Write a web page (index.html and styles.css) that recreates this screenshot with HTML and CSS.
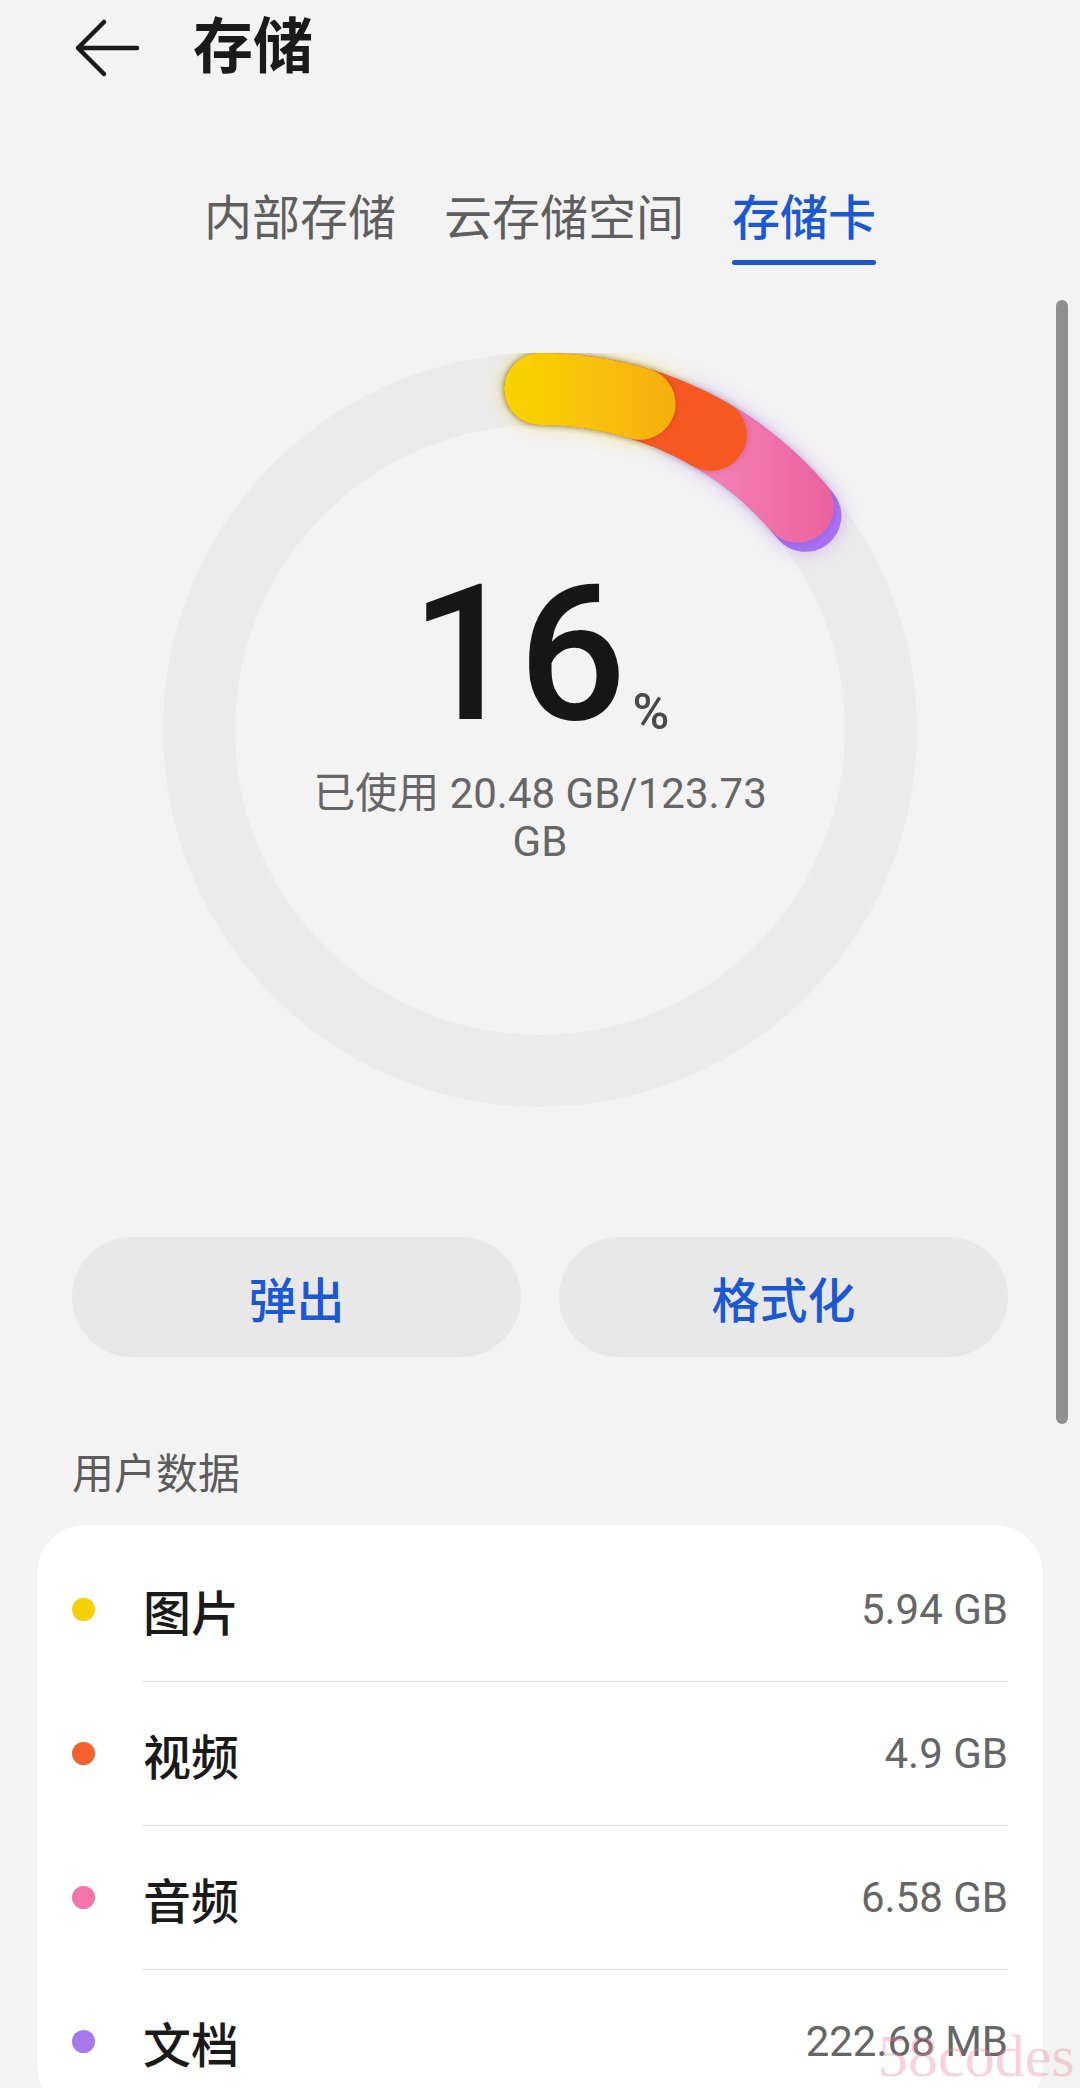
FILE: index.html
```html
<!DOCTYPE html>
<html lang="zh-CN">
<head>
    <meta charset="UTF-8">
    <meta name="viewport" content="width=device-width, initial-scale=1.0">
    <title>存储</title>
    <link rel="stylesheet" href="styles.css">
</head>
<body>

<div class="screen">
    <!-- Заголовок -->
    <header class="top-bar">
        <svg class="back" width="72" height="60" viewBox="0 0 72 60">
            <path d="M8 30 H67 M34 4 L8 30 L34 56" fill="none" stroke="#1a1a1a" stroke-width="4.5" stroke-linecap="round" stroke-linejoin="round"/>
        </svg>
        <h1>存储</h1>
    </header>

    <!-- Вкладки -->
    <nav class="tabs">
        <span class="tab">内部存储</span>
        <span class="tab">云存储空间</span>
        <span class="tab active">存储卡</span>
    </nav>

    <!-- Кольцо заполнения -->
    <div class="gauge">
        <svg width="754" height="754" viewBox="0 0 754 754">
            <defs>
                <!-- группа повёрнута на -90°, поэтому ось y здесь идёт вдоль экрана по горизонтали -->
                <linearGradient id="g-yellow" gradientUnits="userSpaceOnUse" x1="0" y1="335" x2="0" y2="505">
                    <stop offset="0" stop-color="#f9d600"/>
                    <stop offset="1" stop-color="#f6b00f"/>
                </linearGradient>
                <linearGradient id="g-pink" gradientUnits="userSpaceOnUse" x1="0" y1="560" x2="0" y2="680">
                    <stop offset="0" stop-color="#f27db3"/>
                    <stop offset="1" stop-color="#eb5f9c"/>
                </linearGradient>
                <filter id="glow" x="-20%" y="-20%" width="140%" height="140%">
                    <feGaussianBlur stdDeviation="10"/>
                </filter>
                <filter id="edge" x="-20%" y="-20%" width="140%" height="140%">
                    <feDropShadow dx="0" dy="0" stdDeviation="3" flood-color="#000" flood-opacity="0.18"/>
                </filter>
            </defs>
            <circle class="track" cx="377" cy="377" r="341"/>
            <g class="arcs" transform="rotate(-90 377 377)">
                <g filter="url(#glow)" opacity="0.45">
                    <circle cx="377" cy="377" r="341" stroke="#b47cf2" stroke-dasharray="304 3000"/>
                    <circle cx="377" cy="377" r="341" stroke="#f8d000" stroke-dasharray="120 3000"/>
                </g>
                <circle cx="377" cy="377" r="341" stroke="#a86ff0" stroke-dasharray="304 3000"/>
                <circle cx="377" cy="377" r="341" stroke="url(#g-pink)" stroke-dasharray="292 3000" filter="url(#edge)"/>
                <circle cx="377" cy="377" r="341" stroke="#f65922" stroke-dasharray="179 3000" filter="url(#edge)"/>
                <circle cx="377" cy="377" r="341" stroke="url(#g-yellow)" stroke-dasharray="101 3000" filter="url(#edge)"/>
            </g>
        </svg>
        <div class="gauge-text">
            <div class="percent">16<span class="pct">%</span></div>
            <p class="used">已使用 20.48 GB/123.73 GB</p>
        </div>
    </div>

    <!-- Кнопки -->
    <div class="actions">
        <button>弹出</button>
        <button>格式化</button>
    </div>

    <h2 class="section-title">用户数据</h2>

    <!-- Список данных -->
    <div class="card">
        <div class="row">
            <span class="dot" style="background: #f7cf00;"></span>
            <div class="row-body"><span class="label">图片</span><span class="value">5.94 GB</span></div>
        </div>
        <div class="row">
            <span class="dot" style="background: #f3612f;"></span>
            <div class="row-body"><span class="label">视频</span><span class="value">4.9 GB</span></div>
        </div>
        <div class="row">
            <span class="dot" style="background: #f274aa;"></span>
            <div class="row-body"><span class="label">音频</span><span class="value">6.58 GB</span></div>
        </div>
        <div class="row">
            <span class="dot" style="background: #a678ea;"></span>
            <div class="row-body"><span class="label">文档</span><span class="value">222.68 MB</span></div>
        </div>
    </div>
</div>

<div class="scrollbar"></div>
<div class="watermark">58codes</div>

</body>
</html>
```

FILE: styles.css
```css
* {
    margin: 0;
    padding: 0;
    box-sizing: border-box;
}

html, body {
    width: 1080px;
    height: 2088px;
    overflow: hidden;
    background: #f3f3f3;
    font-family: Roboto, "Noto Sans CJK SC", sans-serif;
}

.screen {
    position: relative;
    width: 1080px;
}

/* Заголовок */
.top-bar {
    height: 96px;
    display: flex;
    align-items: center;
}

.top-bar .back {
    margin-left: 70px;
}

.top-bar h1 {
    margin-left: 51px;
    font-size: 60px;
    font-weight: 700;
    line-height: 96px;
    color: #1a1a1a;
}

/* Вкладки */
.tabs {
    display: flex;
    justify-content: center;
    align-items: flex-start;
    gap: 48px;
    margin-top: 91px;
}

.tab {
    display: flex;
    flex-direction: column;
    font-size: 48px;
    line-height: 64px;
    color: #5e5e5e;
}

.tab.active {
    color: #1b58d6;
    font-weight: 500;
}

.tab.active::after {
    content: "";
    height: 5px;
    margin-top: 9px;
    border-radius: 3px;
    background: #1b58d6;
}

/* Кольцо */
.gauge {
    display: grid;
    width: 754px;
    height: 754px;
    margin: 88px auto 0;
}

.gauge > * {
    grid-area: 1 / 1;
}

.gauge circle {
    fill: none;
    stroke-width: 72;
    stroke-linecap: round;
}

.gauge .track {
    stroke: #ebebeb;
}

.gauge-text {
    justify-self: center;
    align-self: start;
    padding-top: 206px;
    display: flex;
    flex-direction: column;
    align-items: center;
    text-align: center;
}

.percent {
    font-size: 190px;
    font-weight: 500;
    line-height: 1;
    height: 190px;
    color: #161616;
}

.percent .pct {
    margin-left: 6px;
    font-size: 50px;
    font-weight: 500;
    line-height: 1;
    color: #4a4a4a;
    vertical-align: -10px;
}

.used {
    max-width: 480px;
    margin-top: 21px;
    font-size: 42px;
    line-height: 48px;
    color: #666;
}

/* Кнопки */
.actions {
    display: flex;
    gap: 38px;
    margin: 130px 72px 0;
}

.actions button {
    flex: 1;
    height: 120px;
    border: none;
    border-radius: 60px;
    background: #e8e8e8;
    color: #1b58d6;
    font-family: Roboto, "Noto Sans CJK SC", sans-serif;
    font-size: 48px;
    font-weight: 500;
}

.section-title {
    margin: 88px 72px 0;
    font-size: 42px;
    font-weight: 400;
    line-height: 60px;
    color: #5c5c5c;
}

/* Карточка */
.card {
    margin: 20px 37px 0;
    padding: 13px 35px 0;
    background: #fff;
    border-radius: 48px;
}

.row {
    display: flex;
    align-items: center;
}

.dot {
    width: 23px;
    height: 23px;
    border-radius: 50%;
    margin-right: 48px;
    flex-shrink: 0;
}

.row-body {
    flex: 1;
    height: 143px;
    display: flex;
    justify-content: space-between;
    align-items: center;
}

.row + .row .row-body {
    height: 144px;
    border-top: 1px solid #dcdcdc;
}

.label {
    font-size: 48px;
    font-weight: 500;
    color: #1a1a1a;
}

.value {
    font-size: 42px;
    color: #666;
}

/* Полоса прокрутки */
.scrollbar {
    position: absolute;
    left: 1056px;
    top: 300px;
    width: 12px;
    height: 1124px;
    border-radius: 6px;
    background: #8f8f8f;
}

.watermark {
    position: absolute;
    left: 878px;
    top: 2022px;
    font-family: "Liberation Serif", serif;
    font-size: 60px;
    color: rgba(236, 130, 160, 0.35);
}
```
